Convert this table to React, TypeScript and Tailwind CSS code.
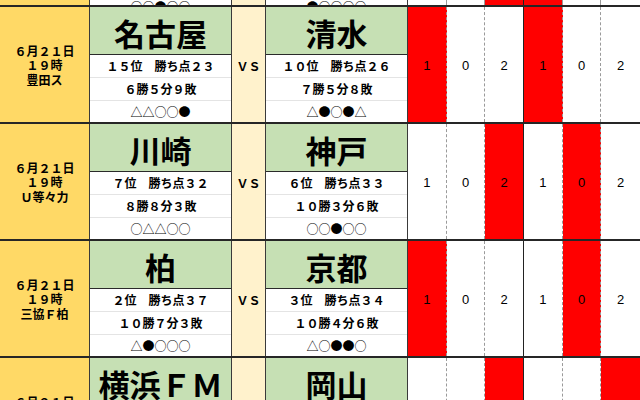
import React from 'react';

interface Side {
  name: string;
  rank: string;
  record: string;
  form: string;
}

interface Match {
  date: string;
  time: string;
  venue: string;
  home: Side;
  away: Side;
  picks: string[];
  hits: boolean[];
}

const MATCHES: Match[] = [
  {
    date: '６月２１日',
    time: '１９時',
    venue: '豊田ス',
    home: { name: '名古屋', rank: '１５位　勝ち点２３', record: '６勝５分９敗', form: '△△○○●' },
    away: { name: '清水', rank: '１０位　勝ち点２６', record: '７勝５分８敗', form: '△●○●△' },
    picks: ['1', '0', '2', '1', '0', '2'],
    hits: [true, false, false, true, false, false],
  },
  {
    date: '６月２１日',
    time: '１９時',
    venue: 'Ｕ等々力',
    home: { name: '川崎', rank: '７位　勝ち点３２', record: '８勝８分３敗', form: '○△△○○' },
    away: { name: '神戸', rank: '６位　勝ち点３３', record: '１０勝３分６敗', form: '○○●○○' },
    picks: ['1', '0', '2', '1', '0', '2'],
    hits: [false, false, true, false, true, false],
  },
  {
    date: '６月２１日',
    time: '１９時',
    venue: '三協Ｆ柏',
    home: { name: '柏', rank: '２位　勝ち点３７', record: '１０勝７分３敗', form: '△●○○○' },
    away: { name: '京都', rank: '３位　勝ち点３４', record: '１０勝４分６敗', form: '△○●●○' },
    picks: ['1', '0', '2', '1', '0', '2'],
    hits: [true, false, false, false, true, false],
  },
  {
    date: '６月２１日',
    time: '１９時',
    venue: '日産ス',
    home: { name: '横浜ＦＭ', rank: '１９位　勝ち点１５', record: '４勝３分１３敗', form: '●●○●△' },
    away: { name: '岡山', rank: '１１位　勝ち点２５', record: '７勝４分９敗', form: '○●△●○' },
    picks: ['1', '0', '2', '1', '0', '2'],
    hits: [false, false, true, false, false, true],
  },
];

// bottom edge of the previous match, scrolled off the top
const PREV_HITS = [false, false, true, true, false, false];

const FONT = { fontFamily: '"Noto Sans CJK JP", "Liberation Sans", sans-serif' };

function TeamCell({ side }: { side: Side }) {
  return (
    <div className="flex flex-col border-r border-[#3a3a3a] bg-white">
      <div className="flex h-[48px] items-center justify-center border-b border-[#2a2a2a] bg-[#c6e0b4] pt-[3px] text-[31px] font-bold leading-none text-black">
        {side.name}
      </div>
      <div className="flex h-[23px] items-center justify-center border-b border-[#e4e4e4] text-[12px] font-bold leading-none">
        {side.rank}
      </div>
      <div className="flex h-[23px] items-center justify-center border-b border-[#e4e4e4] text-[12px] font-bold leading-none">
        {side.record}
      </div>
      <div className="flex h-[21px] items-center justify-center text-[12px] leading-none">
        {side.form}
      </div>
    </div>
  );
}

function pickBorder(i: number) {
  if (i === 2) return 'border-r border-[#222]';
  if (i === 5) return '';
  return 'border-r border-dashed border-[#9a9a9a]';
}

function PrevEdge() {
  return (
    <div className="grid h-[7px] shrink-0 grid-cols-[90px_142px_34px_142px_repeat(6,1fr)] overflow-hidden border-b-2 border-[#262626]">
      <div className="border-r border-[#3a3a3a] bg-[#ffd966]"></div>
      <div className="flex items-end justify-center overflow-hidden border-r border-[#3a3a3a] bg-white">
        <span className="-mb-[8px] text-[12px] leading-none">○○●○○</span>
      </div>
      <div className="border-r border-[#3a3a3a] bg-[#fff2cc]"></div>
      <div className="flex items-end justify-center overflow-hidden border-r border-[#3a3a3a] bg-white">
        <span className="-mb-[8px] text-[12px] leading-none">●○○○○</span>
      </div>
      {PREV_HITS.map((hit, i) => (
        <div key={i} className={[hit ? 'bg-[#ff0000]' : 'bg-white', pickBorder(i)].join(' ')}></div>
      ))}
    </div>
  );
}

function MatchBlock({ match }: { match: Match }) {
  return (
    <div className="grid h-[117px] shrink-0 grid-cols-[90px_142px_34px_142px_repeat(6,1fr)] border-b-2 border-[#262626]">
      <div className="flex flex-col items-center justify-center border-r border-[#3a3a3a] bg-[#ffd966] pt-[2px] text-[12px] font-bold leading-[14.5px] text-black">
        <span>{match.date}</span>
        <span>{match.time}</span>
        <span>{match.venue}</span>
      </div>
      <TeamCell side={match.home} />
      <div className="flex items-center justify-center border-r border-[#3a3a3a] bg-[#fff2cc] pt-[2px] text-[12px] font-bold">
        ＶＳ
      </div>
      <TeamCell side={match.away} />
      {match.picks.map((pick, i) => (
        <div
          key={i}
          className={[
            'flex items-center justify-center pt-[2px] text-[13px]',
            match.hits[i] ? 'bg-[#ff0000]' : 'bg-white',
            pickBorder(i),
          ].join(' ')}
          style={{ fontFamily: '"Liberation Sans", sans-serif' }}
        >
          {pick}
        </div>
      ))}
    </div>
  );
}

export default function App() {
  return (
    <div className="flex h-[400px] w-[640px] flex-col overflow-hidden bg-white text-black" style={FONT}>
      <PrevEdge />
      {MATCHES.map((m) => (
        <MatchBlock key={m.venue} match={m} />
      ))}
    </div>
  );
}
